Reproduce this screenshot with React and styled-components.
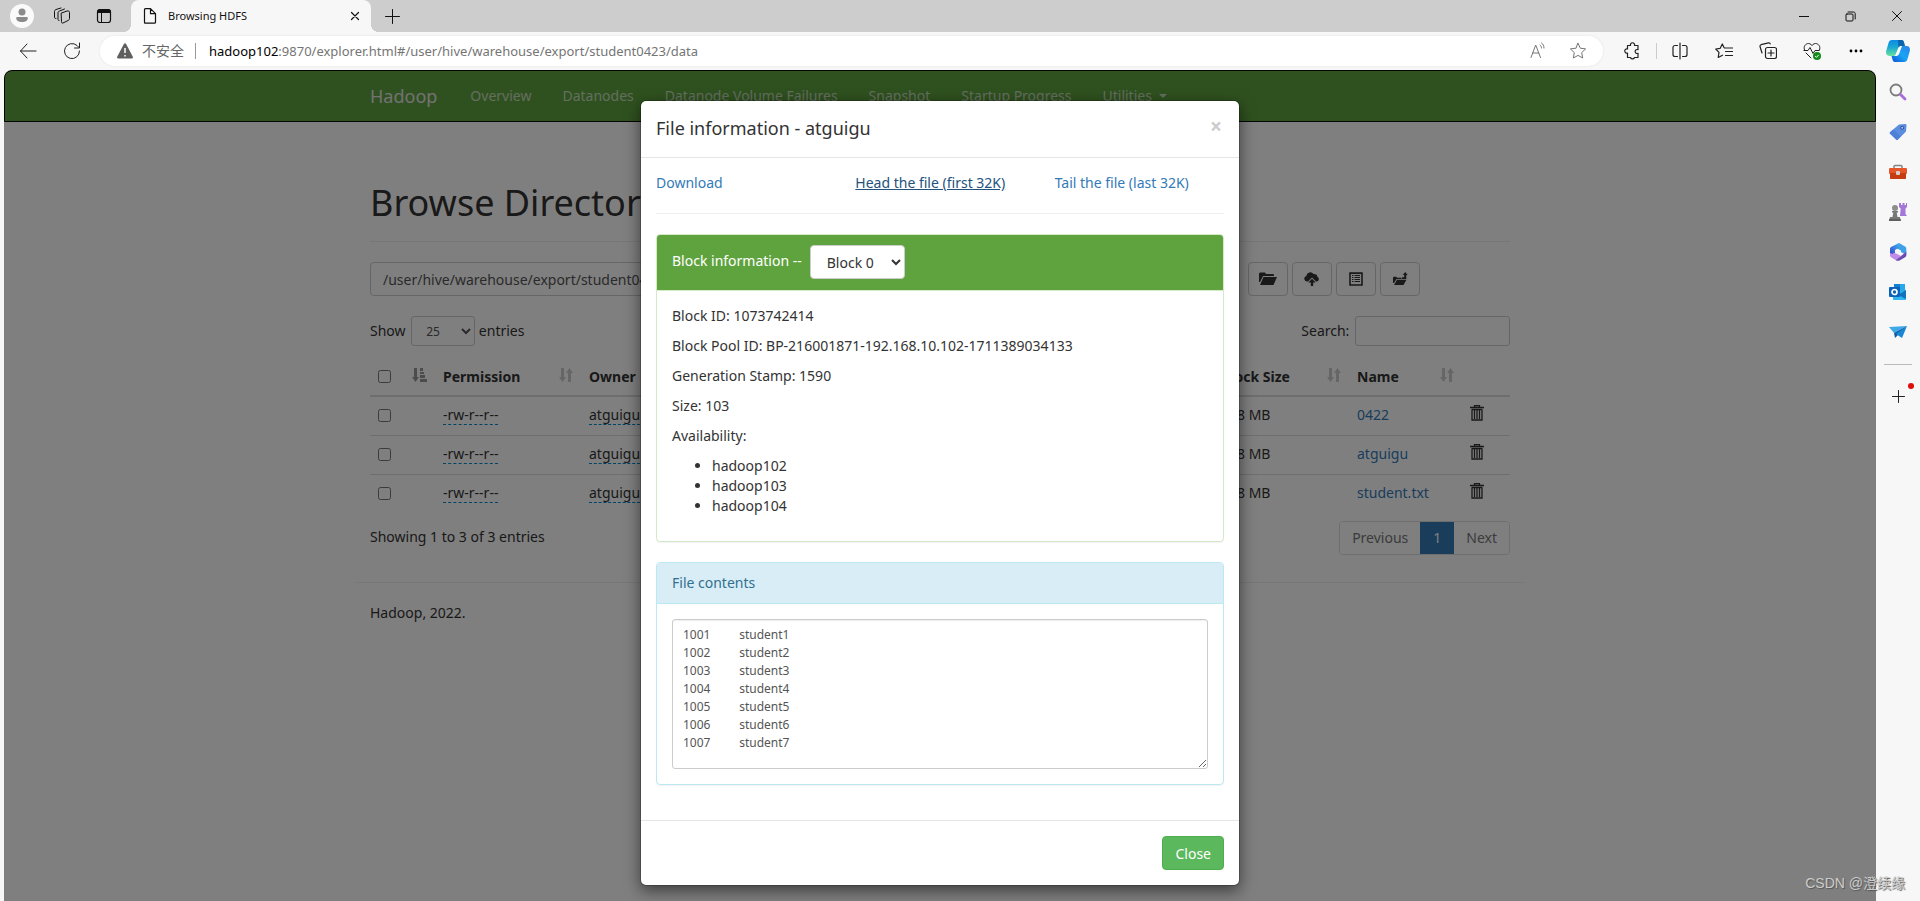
import React from "react";
import styled, { createGlobalStyle } from "styled-components";

const files = ["0422", "atguigu", "student.txt"];
const sizes = ["0 B", "103 B", "103 B"];
const dates = ["Apr 22 19:50", "Apr 23 10:12", "Apr 23 09:36"];
const hosts = ["hadoop102", "hadoop103", "hadoop104"];
const columns = ["Permission", "Owner", "Group", "Size", "Last Modified", "Replication", "Block Size", "Name"];
const contents = [1, 2, 3, 4, 5, 6, 7].map((n) => `100${n}\tstudent${n}`).join("\n");

function Line({ size = 18, width = 1, children }) {
  return (
    <svg width={size} height={size} viewBox={`0 0 ${size} ${size}`} fill="none" stroke="currentColor" strokeWidth={width} strokeLinecap="round" strokeLinejoin="round" aria-hidden="true">
      {children}
    </svg>
  );
}

function SortIcon() {
  return (
    <svg width="14" height="16" viewBox="0 0 14 16" fill="currentColor" aria-hidden="true">
      <path d="M2 1h3v9h2l-3.500 5L0 10h2zM9 15h3V6h2l-3.500-5L7 6h2z" />
    </svg>
  );
}

function SortAttrIcon() {
  return (
    <svg width="15" height="16" viewBox="0 0 15 16" fill="currentColor" aria-hidden="true">
      <path d="M2 1h3v9h2l-3.500 5L0 10h2zM8 1h3v3H8zM8 5h4v2H8zM8 8h5v3H8zM8 12h7v3H8z" />
    </svg>
  );
}

function TrashIcon() {
  return (
    <svg width="14" height="16" viewBox="0 0 14 16" fill="none" stroke="currentColor" aria-hidden="true">
      <path d="M4.500 2.500v-2h5v2M0 2.500h14" strokeWidth="1.300" />
      <path d="M2 5v10h10V5M1.500 4.500h11M4.500 5v9M7 5v9M9.500 5v9" strokeWidth="1.300" />
    </svg>
  );
}

function FolderIcon() {
  return (
    <svg width="18" height="14" viewBox="0 0 18 14" fill="currentColor" aria-hidden="true">
      <path d="M0 10V1.500L1 .500h5l1 1.500h7.500l.500 1v1H4L1 10zM4.500 5H18l-3.500 8H1z" />
    </svg>
  );
}

function UploadIcon() {
  return (
    <svg width="16" height="14" viewBox="0 0 16 14" fill="currentColor" aria-hidden="true">
      <path d="M3 9.500A2.800 2.800 0 0 1 2.300 4 4 4 0 0 1 9.500 2 3.400 3.400 0 0 1 13.500 5a2.400 2.400 0 0 1-.5 4.500h-1L8 5.500 4 9.500z" />
      <path d="M8 6.800l3.700 3.800H9.200V14H6.800v-3.400H4.300z" />
    </svg>
  );
}

function ListIcon() {
  return (
    <svg width="14" height="14" viewBox="0 0 14 14" fill="none" stroke="currentColor" aria-hidden="true">
      <path d="M1 1h12v12H1z" strokeWidth="1.600" />
      <path d="M3 3.500h1.500M3 5.500h1.500M3 7.500h1.500M3 9.500h1.500M5.500 3.500H11M5.500 5.500H11M5.500 7.500H11M5.500 9.500H11M1 1.500h12" />
    </svg>
  );
}

function MoveIcon() {
  return (
    <svg width="15" height="14" viewBox="0 0 15 14" fill="currentColor" aria-hidden="true">
      <path d="M0 11V5.500l.7-.7h2.600l.7 1h4.500V7h-5L1 11zM4 7.700h9.500L10.500 13H1z" />
      <path d="M9 5.300h2.200V3H9.800l2.400-3 2.500 3h-1.400v4H9z" />
    </svg>
  );
}

function CopilotIcon() {
  return (
    <svg width="24" height="24" viewBox="0 0 24 24" aria-hidden="true">
      <defs>
        <linearGradient id="cpA" x1="0" y1="0" x2="0" y2="1">
          <stop offset="0" stopColor="#0c8ae6" />
          <stop offset=".45" stopColor="#19a8d4" />
          <stop offset="1" stopColor="#67e29b" />
        </linearGradient>
        <linearGradient id="cpB" x1="1" y1="0" x2="0" y2="1">
          <stop offset="0" stopColor="#2b7fe8" />
          <stop offset=".5" stopColor="#19a6f5" />
          <stop offset="1" stopColor="#0b4fd6" />
        </linearGradient>
      </defs>
      <path d="M6 1h9.500c1.700 0 2.200 1.300 2.500 2.500L19 7h-4c-2 0-2.500 1-3.200 3l-2 5.500C9.300 16.700 8 17 7 17H3.500C.5 17-.3 14.500.2 12L2.500 4C3 2 4 1 6 1z" fill="url(#cpA)" />
      <path d="M18 23H9c-1.700 0-2-1.300-2.500-2.500L5.500 17H9c2 0 2.500-1 3.200-3l2-5.500C14.700 7.300 16 7 17 7h3.500c3 0 3.800 2.500 3.300 5l-2.300 8c-.5 2-1.500 3-3.500 3z" fill="url(#cpB)" />
      <path d="M12 1h4c1 0 1.700 1 2 2.500L19 7h-3c-2 0-3 .5-3.500 2z" fill="#09549c" opacity=".75" />
      <path d="M13 8.500c.5-1 1.500-1.500 3-1.500l-3 8c-.6 1.500-2 2-4 2z" fill="#fff" />
    </svg>
  );
}

function SearchIcon() {
  return (
    <svg width="18" height="18" viewBox="0 0 18 18" fill="none" aria-hidden="true">
      <circle cx="7" cy="7" r="5.500" stroke="#7b7b7b" strokeWidth="1.800" />
      <path d="M11.500 11.500l4.500 4.500" stroke="#a76ddb" strokeWidth="2.800" strokeLinecap="round" />
    </svg>
  );
}

function TagIcon() {
  return (
    <svg width="18" height="18" viewBox="0 0 18 18" aria-hidden="true">
      <path d="M10 1.500L16 1c1 0 1.500.5 1.500 1.500l-.5 6-8 8c-.7.7-1.400.7-2 0L1.200 11c-.7-.7-.7-1.400 0-2z" fill="#5b8de0" />
      <path d="M3 12.500L1.200 11c-.7-.7-.7-1.400 0-2L4 6.500l8 7-3 3c-.7.7-1.400.7-2 0z" fill="#4672cf" opacity=".5" />
      <circle cx="13.200" cy="4.800" r="1.500" fill="#a9c8f5" stroke="#274a94" />
    </svg>
  );
}

function ToolboxIcon() {
  return (
    <svg width="18" height="16" viewBox="0 0 18 16" aria-hidden="true">
      <path d="M5 4V2.500c0-.8.4-1 1-1h6c.6 0 1 .2 1 1V4" fill="none" stroke="#858585" strokeWidth="1.500" />
      <rect y="4" width="18" height="6" rx="1" fill="#e5572a" />
      <path d="M1 9h16v5c0 .7-.4 1-1 1H2c-.6 0-1-.3-1-1z" fill="#c63c11" />
      <rect x="7" y="7" width="4" height="4" rx="1" fill="#d5d0cd" />
    </svg>
  );
}

function GamesIcon() {
  return (
    <svg width="18" height="18" viewBox="0 0 18 18" aria-hidden="true">
      <path d="M10 0h2v2h1.500V0h2v2H17V0h1v4l-1.500 1.500V11L18 13h-7l.7-7.500L10 4z" fill="#a376d8" />
      <circle cx="6" cy="5" r="3" fill="#8d8d8d" />
      <path d="M3 8h6v1.500H7.700L8.500 14H11l.7 4H0l1-4h2.500l.8-4.500H3z" fill="#777" />
      <path d="M0 16h11.700v2H0z" fill="#5f5f5f" />
    </svg>
  );
}

function OfficeIcon() {
  return (
    <svg width="18" height="18" viewBox="0 0 18 18" aria-hidden="true">
      <defs>
        <linearGradient id="ofA" x1="1" y1="0" x2="0" y2="1">
          <stop offset="0" stopColor="#41b7f0" />
          <stop offset="1" stopColor="#3443c8" />
        </linearGradient>
        <linearGradient id="ofB" x1="0" y1="0" x2="1" y2="1">
          <stop offset="0" stopColor="#8c7ae6" />
          <stop offset="1" stopColor="#5a2d91" />
        </linearGradient>
      </defs>
      <path d="M10 0l6 3.500c1 .6 1.300 1.200 1.300 2.500v6L12 9V7.500L7 5z" fill="#3fa0ea" />
      <path d="M10 0L2.500 3.700C1.300 4.400 1 5 1 6v6.500L6 10V7l5-3z" fill="url(#ofA)" />
      <path d="M1 10v2c0 1.300.5 2 1.500 2.500l4 2.500L12 13l-6-3-2 1z" fill="#c18be8" />
      <path d="M17.300 8.500V12c0 1-.3 1.700-1.300 2.300l-5 3c-1.500.8-3 .8-4.500-.3L12 13z" fill="url(#ofB)" />
    </svg>
  );
}

function OutlookIcon() {
  return (
    <svg width="18" height="18" viewBox="0 0 18 18" aria-hidden="true">
      <path d="M5 1h11v9H5z" fill="#28a8ea" />
      <path d="M5 1h6v7H5z" fill="#1480cf" />
      <path d="M4 9h6l7-2v9c0 .6-.4 1-1 1H5c-.6 0-1-.4-1-1z" fill="#2fb6f0" />
      <path d="M9 12l8-5v9z" fill="#1272bd" />
      <rect y="4" width="11" height="10" rx="1" fill="#0a62bb" />
      <circle cx="5.500" cy="9" r="2.500" fill="none" stroke="#fff" strokeWidth="1.700" />
    </svg>
  );
}

function SendIcon() {
  return (
    <svg width="18" height="14" viewBox="0 0 18 14" aria-hidden="true">
      <path d="M0 2L18 1 5 8z" fill="#3ea9e8" />
      <path d="M18 1L5 8l1 5 3-3z" fill="#0e5da3" />
      <path d="M18 1l-5 12-6-4z" fill="#1b87d4" />
    </svg>
  );
}

function Chrome() {
  return (
    <>
      <TabBar>
        <Avatar aria-label="Profile">
          <svg width="12" height="16" viewBox="0 0 12 16" fill="#8b8b8b" aria-hidden="true">
            <circle cx="6" cy="4" r="3.500" />
            <path d="M1.500 9h9c.8 0 1.300.5 1.300 1.200 0 2.200-2.300 3.800-5.800 3.800S.2 12.400.2 10.200C.2 9.500.7 9 1.500 9z" />
          </svg>
        </Avatar>
        <TabTool aria-label="Workspaces">
          <Line>
            <path d="M8.500 6l5.500-2c1.500-.4 2.500.2 2.500 1.500v6c0 1-.5 1.500-1.500 2L10 16c-1 .3-1.500 0-1.500-1z" />
            <path d="M6 13.500c-.7 0-1-.3-1-1.200V6c0-1 .4-1.600 1.500-2l5-2M3 11.500c-1 .2-1.500-.3-1.500-1.200V4.500c0-1 .5-1.600 1.500-2L8 1" />
          </Line>
        </TabTool>
        <TabTool aria-label="Tab actions">
          <svg width="16" height="16" viewBox="0 0 16 16" fill="none" stroke="currentColor" aria-hidden="true">
            <rect x="1.500" y="1.500" width="13" height="13" rx="2.500" strokeWidth="1.200" />
            <path d="M2 2h12v2.500H2z" fill="currentColor" />
            <path d="M5.500 5v9.500" />
          </svg>
        </TabTool>
        <Tab>
          <Line size={16} width={1.2}>
            <path d="M3.500.7h5l5 5v8.500c0 .7-.3 1-1 1h-9c-.7 0-1-.3-1-1V1.700c0-.7.3-1 1-1zM8.500.7v5h5" />
          </Line>
          <TabTitle>Browsing HDFS</TabTitle>
          <PlainButton aria-label="Close tab">
            <Line size={10} width={1.2}><path d="M1.500 1.500l7 7M8.500 1.500l-7 7" /></Line>
          </PlainButton>
        </Tab>
        <PlainButton aria-label="New tab">
          <Line size={15}><path d="M7.500 .5v14M.5 7.500h14" /></Line>
        </PlainButton>
        <WindowControls>
          <PlainButton aria-label="Minimize"><Line size={10}><path d="M0 5.500h10" /></Line></PlainButton>
          <PlainButton aria-label="Restore">
            <Line size={11}><path d="M2 3h5c.7 0 1 .3 1 1v5c0 .7-.3 1-1 1H2c-.7 0-1-.3-1-1V4c0-.7.3-1 1-1zM3 1h5.500c1 0 1.700.7 1.700 1.700V8" /></Line>
          </PlainButton>
          <PlainButton aria-label="Close window"><Line size={10}><path d="M.5.5l9 9M9.500.5l-9 9" /></Line></PlainButton>
        </WindowControls>
      </TabBar>
      <Toolbar>
        <ToolButton aria-label="Back"><Line><path d="M1.500 9H17M8 2L1.500 9 8 16" /></Line></ToolButton>
        <ToolButton aria-label="Refresh">
          <Line><path d="M16.500 9A7.500 7.500 0 1 1 14 3.500l2 2M16.500 1v5h-5" /></Line>
        </ToolButton>
        <AddressBar>
          <svg width="18" height="16" viewBox="0 0 18 16" aria-hidden="true">
            <path d="M8 .8c.5-.8 1.500-.8 2 0l6.800 13c.4.800 0 1.700-1 1.700H2.200c-1 0-1.400-.9-1-1.700z" fill="#5f5f5f" />
            <path d="M9 5v5M9 12v1.500" stroke="#fff" strokeWidth="1.500" />
          </svg>
          <Unsafe>不安全</Unsafe>
          <Url><b>hadoop102</b>:9870/explorer.html#/user/hive/warehouse/export/student0423/data</Url>
          <AddressTools>
            <PlainButton aria-label="Read aloud">
              <Line><path d="M2 15.500L6.700 3l4.800 12.500M3.700 11h6M11 3c1 .8 1.500 1.800 1.500 3M12.500 1c1.700 1.200 2.500 2.800 2.500 5" /></Line>
            </PlainButton>
            <PlainButton aria-label="Favorite">
              <Line><path d="M9 1.300l2.300 4.900 5.300.7-3.900 3.700 1 5.400L9 13.400 4.300 16l1-5.400L1.400 6.900l5.300-.7z" /></Line>
            </PlainButton>
          </AddressTools>
        </AddressBar>
        <Tools>
          <ToolButton aria-label="Extensions">
            <Line width={1.2}><path d="M4.500 3.500h3a2.100 2.100 0 1 1 4 0h3.500v4.200a2 2 0 1 0 0 3.600v4.200h-3.500a2.100 2.100 0 0 1-4 0h-3v-4.500a2.100 2.100 0 1 1 0-4z" /></Line>
          </ToolButton>
          <Rule />
          <ToolButton aria-label="Split screen">
            <Line width={1.2}><path d="M9 1v16M6.500 3.500H4a2 2 0 0 0-2 2v7a2 2 0 0 0 2 2h2.500M11.500 3.500H14a2 2 0 0 1 2 2v7a2 2 0 0 1-2 2h-2.500" /></Line>
          </ToolButton>
          <ToolButton aria-label="Favorites">
            <Line width={1.2}><path d="M9 5.500L7.300 2 5.200 6.300l-4.500.7L4 10.400 3.200 15.500l4.300-2.300M9.500 6h8M10.500 9.500h7M10.500 13.500h7" /></Line>
          </ToolButton>
          <ToolButton aria-label="Collections">
            <Line width={1.2}><path d="M3 11L1 4.500C.8 3.500 1.200 3 2 2.700l7.500-1.800c.8-.2 1.500.2 1.700 1" /><rect x="6.500" y="5.500" width="11" height="11" rx="2" /><path d="M12 8v6M9 11h6" /></Line>
          </ToolButton>
          <ToolButton aria-label="Browser essentials">
            <Line><path d="M1.500 8C0 4 3 1.500 5.500 1.500 7.500 1.500 9 3.500 9 3.500s1.500-2 3.500-2C15 1.500 18 4 16.500 8M1 8.500h4l2-3 3 6 2-3h4M3 11l5 5" /><circle cx="14" cy="14" r="4" fill="#128a1c" stroke="none" /><path d="M12.500 14.500l1 .8 2-2.200" stroke="#fff" /></Line>
          </ToolButton>
          <ToolButton aria-label="Settings and more">
            <svg width="14" height="4" viewBox="0 0 14 4" aria-hidden="true"><circle cx="2" cy="2" r="1.400" /><circle cx="7" cy="2" r="1.400" /><circle cx="12" cy="2" r="1.400" /></svg>
          </ToolButton>
          <CopilotButton aria-label="Copilot"><CopilotIcon /></CopilotButton>
        </Tools>
      </Toolbar>
    </>
  );
}

function Explorer() {
  return (
    <>
      <Navbar>
        <Container>
          <Brand href="#">Hadoop</Brand>
          <NavLink href="#">Overview</NavLink>
          <NavLink href="#">Datanodes</NavLink>
          <NavLink href="#">Datanode Volume Failures</NavLink>
          <NavLink href="#">Snapshot</NavLink>
          <NavLink href="#">Startup Progress</NavLink>
          <NavLink href="#">Utilities<Caret /></NavLink>
        </Container>
      </Navbar>
      <Main>
        <PageTitle>Browse Directory</PageTitle>
        <PathRow>
          <PathInput aria-label="Directory" defaultValue="/user/hive/warehouse/export/student0423/data" />
          <ActionButton aria-label="Create directory"><FolderIcon /></ActionButton>
          <ActionButton aria-label="Upload files"><UploadIcon /></ActionButton>
          <ActionButton aria-label="Cut"><ListIcon /></ActionButton>
          <ActionButton aria-label="Parent directory"><MoveIcon /></ActionButton>
        </PathRow>
        <FilterRow>
          <label>
            Show{" "}
            <LengthSelect defaultValue="25"><option>25</option></LengthSelect>{" "}
            entries
          </label>
          <label>Search: <SearchInput type="search" /></label>
        </FilterRow>
        <FileTable>
          <thead>
            <tr>
              <Th $w={65}>
                <HeadCell><Check type="checkbox" aria-label="Select all" /><Sort $active><SortAttrIcon /></Sort></HeadCell>
              </Th>
              {columns.map((c, i) => (
                <Th key={c} $w={[146, 120, 130, 96, 156, 130, 136, 113][i]}>
                  <HeadCell>{c}<Sort><SortIcon /></Sort></HeadCell>
                </Th>
              ))}
              <Th $w={48} />
            </tr>
          </thead>
          <tbody>
            {files.map((f, i) => (
              <tr key={f}>
                <Td><Check type="checkbox" aria-label={`Select ${f}`} $row /></Td>
                <Td><Editable>-rw-r--r--</Editable></Td>
                <Td><Editable>atguigu</Editable></Td>
                <Td><Editable>supergroup</Editable></Td>
                <Td>{sizes[i]}</Td>
                <Td>{dates[i]}</Td>
                <Td><Editable>3</Editable></Td>
                <Td>128 MB</Td>
                <Td><Link href="#">{f}</Link></Td>
                <Td><PlainButton aria-label={`Delete ${f}`}><TrashIcon /></PlainButton></Td>
              </tr>
            ))}
          </tbody>
        </FileTable>
        <TableFooter>
          <span>Showing 1 to 3 of 3 entries</span>
          <Pagination>
            <PageLink href="#">Previous</PageLink>
            <PageLink href="#" $active>1</PageLink>
            <PageLink href="#">Next</PageLink>
          </Pagination>
        </TableFooter>
        <Footer>Hadoop, 2022.</Footer>
      </Main>
    </>
  );
}

function FileModal() {
  return (
    <Backdrop>
      <Dialog role="dialog" aria-labelledby="file-title">
        <DialogHeader>
          <DialogTitle id="file-title">File information - atguigu</DialogTitle>
          <Dismiss aria-label="Dismiss">×</Dismiss>
        </DialogHeader>
        <DialogBody>
          <LinkRow>
            <Link href="#">Download</Link>
            <Link href="#" $hover>Head the file (first 32K)</Link>
            <Link href="#">Tail the file (last 32K)</Link>
          </LinkRow>
          <Divider />
          <Panel $border="#d6e9c6">
            <PanelHeading $tall $bg="#5fa33e" $color="#fff" $border="#d6e9c6">
              <BlockLabel htmlFor="block">Block information -- </BlockLabel>
              <BlockSelect id="block" defaultValue="Block 0"><option>Block 0</option></BlockSelect>
            </PanelHeading>
            <PanelBody>
              <Info>Block ID: 1073742414</Info>
              <Info>Block Pool ID: BP-216001871-192.168.10.102-1711389034133</Info>
              <Info>Generation Stamp: 1590</Info>
              <Info>Size: 103</Info>
              <Info>Availability:</Info>
              <HostList>{hosts.map((h) => <li key={h}>{h}</li>)}</HostList>
            </PanelBody>
          </Panel>
          <Panel $border="#bce8f1">
            <PanelHeading as="label" htmlFor="contents" $bg="#d9edf7" $color="#31708f" $border="#bce8f1">File contents</PanelHeading>
            <PanelBody>
              <Contents id="contents" defaultValue={contents} />
            </PanelBody>
          </Panel>
        </DialogBody>
        <DialogFooter>
          <CloseButton>Close</CloseButton>
        </DialogFooter>
      </Dialog>
    </Backdrop>
  );
}

function App() {
  return (
    <Window>
      <GlobalStyle />
      <Chrome />
      <Content>
        <Page>
          <Explorer />
          <FileModal />
        </Page>
        <Sidebar>
          <SideButton aria-label="Search"><SearchIcon /></SideButton>
          <SideButton aria-label="Shopping"><TagIcon /></SideButton>
          <SideButton aria-label="Tools"><ToolboxIcon /></SideButton>
          <SideButton aria-label="Games"><GamesIcon /></SideButton>
          <SideButton aria-label="Microsoft 365"><OfficeIcon /></SideButton>
          <SideButton aria-label="Outlook"><OutlookIcon /></SideButton>
          <SideButton aria-label="Drop"><SendIcon /></SideButton>
          <SideRule />
          <SideButton aria-label="Customize"><Line size={13}><path d="M6.500 .5v12M.5 6.500h12" /></Line><Dot /></SideButton>
        </Sidebar>
      </Content>
      <Watermark>CSDN @澄续缘</Watermark>
    </Window>
  );
}

export default App;

const GlobalStyle = createGlobalStyle`
  * {
    box-sizing: border-box;
  }
  body {
    margin: 0;
    font-family: "Noto Sans", "Noto Sans CJK SC", sans-serif;
    font-size: 14px;
    line-height: 20px;
    color: #333;
  }
  input, select, textarea, button {
    font-family: inherit;
  }
`;

const Window = styled.div`
  position: relative;
  display: flex;
  flex-direction: column;
  height: 100vh;
  overflow: hidden;
  background: #f7f7f7;
`;

const PlainButton = styled.button`
  display: flex;
  align-items: center;
  justify-content: center;
  padding: 0;
  border: 0;
  background: none;
  color: inherit;
`;

const TabBar = styled.div`
  display: flex;
  align-items: center;
  height: 32px;
  flex-shrink: 0;
  padding-left: 10px;
  background: #cdcdcd;
  color: #111;
`;

const Avatar = styled(PlainButton)`
  width: 24px;
  height: 24px;
  margin-right: 7px;
  border-radius: 50%;
  background: #fafafa;
`;

const TabTool = styled(PlainButton)`
  width: 42px;
  height: 32px;
`;

const Tab = styled.div`
  position: relative;
  display: flex;
  align-items: center;
  align-self: stretch;
  width: 240px;
  margin: 0 14px 0 6px;
  padding: 0 11px;
  border-radius: 8px 8px 0 0;
  background: #f7f7f7;
  &::before,
  &::after {
    content: "";
    position: absolute;
    bottom: 0;
    width: 8px;
    height: 8px;
  }
  &::before {
    left: -8px;
    background: radial-gradient(circle at 0 0, #cdcdcd 8px, #f7f7f7 8px);
  }
  &::after {
    right: -8px;
    background: radial-gradient(circle at 100% 0, #cdcdcd 8px, #f7f7f7 8px);
  }
`;

const TabTitle = styled.span`
  flex: 1;
  margin-left: 10px;
  font-size: 11px;
  color: #111;
`;

const WindowControls = styled.div`
  display: flex;
  gap: 36px;
  margin-left: auto;
  padding-right: 18px;
`;

const Toolbar = styled.div`
  display: flex;
  align-items: center;
  height: 38px;
  flex-shrink: 0;
  padding-left: 6px;
  color: #222;
`;

const ToolButton = styled(PlainButton)`
  width: 44px;
  height: 30px;
`;

const CopilotButton = styled(ToolButton)`
  width: 40px;
`;

const AddressBar = styled.div`
  display: flex;
  align-items: center;
  flex: 1;
  height: 30px;
  margin-left: 6px;
  padding: 0 16px;
  border-radius: 15px;
  background: #fff;
  box-shadow: 0 0 3px rgba(0, 0, 0, 0.08);
  color: #757575;
`;

const Unsafe = styled.span`
  margin-left: 8px;
  padding-right: 11px;
  border-right: 1px solid #999;
  line-height: 16px;
  color: #666;
`;

const Url = styled.span`
  margin-left: 13px;
  font-size: 13px;
  b {
    font-weight: 400;
    color: #000;
  }
`;

const AddressTools = styled.div`
  display: flex;
  gap: 22px;
  margin-left: auto;
`;

const Tools = styled.div`
  display: flex;
  align-items: center;
  padding: 0 2px 0 7px;
`;

const Rule = styled.div`
  width: 1px;
  height: 16px;
  margin: 0 1px 0 2px;
  background: #ccc;
`;

const Content = styled.div`
  display: flex;
  flex: 1;
  min-height: 0;
`;

const Page = styled.div`
  position: relative;
  flex: 1;
  margin-left: 4px;
  overflow: hidden;
  border-radius: 8px 8px 0 0;
  background: #fff;
`;

const Navbar = styled.nav`
  border: 1px solid #080808;
  border-radius: 8px 8px 0 0;
  background: #5fa33e;
`;

const Container = styled.div`
  display: flex;
  gap: 1px;
  max-width: 1170px;
  margin: 0 auto;
`;

const NavLink = styled.a`
  display: flex;
  align-items: center;
  height: 50px;
  padding: 0 15px;
  color: #c8dcbe;
  text-decoration: none;
`;

const Brand = styled(NavLink)`
  padding-right: 17px;
  font-size: 18px;
  color: #e4e4e4;
`;

const Caret = styled.span`
  margin-left: 7px;
  border: 4px solid transparent;
  border-top-color: currentColor;
  border-bottom: 0;
`;

const Main = styled.main`
  display: flex;
  flex-direction: column;
  max-width: 1170px;
  margin: 60px auto 0;
  padding: 0 15px;
`;

const PageTitle = styled.h1`
  margin: 0 0 20px;
  padding-bottom: 17px;
  border-bottom: 1px solid #eee;
  font-size: 36px;
  line-height: 42px;
  font-weight: 400;
`;

const PathRow = styled.div`
  display: flex;
  gap: 4px;
  padding-right: 90px;
`;

const PathInput = styled.input`
  flex: 1;
  height: 34px;
  margin-right: 14px;
  padding: 6px 12px;
  border: 1px solid #ccc;
  border-radius: 4px;
  background: #fff;
  color: #555;
  font-size: 14px;
`;

const ActionButton = styled(PlainButton)`
  width: 40px;
  height: 34px;
  border: 1px solid #ccc;
  border-radius: 4px;
  background: #fff;
  color: #333;
`;

const FilterRow = styled.div`
  display: flex;
  justify-content: space-between;
  margin-top: 20px;
`;

const LengthSelect = styled.select`
  width: 64px;
  height: 30px;
  margin-left: 2px;
  padding: 5px 10px;
  border: 1px solid #ccc;
  border-radius: 3px;
  background: #fff;
  color: #555;
  font-size: 12px;
`;

const SearchInput = styled.input`
  width: 155px;
  height: 30px;
  margin-left: 2px;
  border: 1px solid #ccc;
  border-radius: 3px;
`;

const FileTable = styled.table`
  width: 100%;
  margin-top: 5px;
  border-collapse: collapse;
  table-layout: fixed;
`;

const Th = styled.th`
  width: ${(props) => props.$w}px;
  height: 45px;
  padding: 8px;
  border-bottom: 2px solid #ddd;
  text-align: left;
  vertical-align: bottom;
`;

const HeadCell = styled.div`
  display: flex;
  align-items: center;
  justify-content: space-between;
  white-space: nowrap;
`;

const Sort = styled.span`
  display: flex;
  align-items: flex-start;
  height: 20px;
  color: ${(props) => (props.$active ? "#999" : "#ccc")};
`;

const Td = styled.td`
  height: 39px;
  padding: 8px;
  border-top: 1px solid #ddd;
  vertical-align: top;
`;

const Check = styled.input`
  display: block;
  width: 13px;
  height: 13px;
  margin: ${(props) => (props.$row ? "4px" : 0)} 0 2px;
`;

const Editable = styled.span`
  border-bottom: 1px dashed #08c;
`;

const Link = styled.a`
  color: ${(props) => (props.$hover ? "#23527c" : "#337ab7")};
  text-decoration: ${(props) => (props.$hover ? "underline" : "none")};
`;

const TableFooter = styled.div`
  display: flex;
  justify-content: space-between;
  margin-top: 8px;
  line-height: 32px;
`;

const Pagination = styled.div`
  display: flex;
  height: 34px;
  overflow: hidden;
  border: 1px solid #ddd;
  border-radius: 4px;
`;

const PageLink = styled.a`
  padding: 0 ${(props) => (props.$active ? 13 : 12)}px;
  background: ${(props) => (props.$active ? "#337ab7" : "#fff")};
  color: ${(props) => (props.$active ? "#fff" : "#777")};
  line-height: 32px;
  text-decoration: none;
`;

const Footer = styled.footer`
  margin: 27px -15px 0;
  padding: 20px 15px;
  border-top: 1px solid #eee;
`;

const Backdrop = styled.div`
  position: absolute;
  inset: 0;
  padding: 30px 10px;
  background: rgba(0, 0, 0, 0.5);
`;

const Dialog = styled.section`
  max-width: 600px;
  margin: 0 auto;
  border: 1px solid rgba(0, 0, 0, 0.2);
  border-radius: 6px;
  background: #fff;
  background-clip: padding-box;
  box-shadow: 0 5px 15px rgba(0, 0, 0, 0.5);
`;

const DialogHeader = styled.header`
  display: flex;
  justify-content: space-between;
  align-items: flex-start;
  padding: 15px 15px 17px;
  border-bottom: 1px solid #e5e5e5;
`;

const DialogTitle = styled.h4`
  margin: 0;
  font-size: 18px;
  line-height: 24px;
  font-weight: 400;
`;

const Dismiss = styled(PlainButton)`
  width: 16px;
  height: 20px;
  color: #ccc;
  font-size: 21px;
  font-weight: 700;
`;

const DialogBody = styled.div`
  padding: 15px;
`;

const LinkRow = styled.div`
  display: grid;
  grid-template-columns: repeat(3, 1fr);
  margin-right: -30px;
`;

const Divider = styled.hr`
  margin: 20px 0;
  border: 0;
  border-top: 1px solid #eee;
`;

const Panel = styled.div`
  margin-bottom: 20px;
  border: 1px solid ${(props) => props.$border};
  border-radius: 4px;
  box-shadow: 0 1px 1px rgba(0, 0, 0, 0.05);
`;

const PanelHeading = styled.div`
  display: flex;
  align-items: flex-start;
  gap: 8px;
  min-height: ${(props) => (props.$tall ? 56 : 41)}px;
  padding: 10px 15px;
  border-bottom: 1px solid ${(props) => props.$border};
  border-radius: 3px 3px 0 0;
  background: ${(props) => props.$bg};
  color: ${(props) => props.$color};
`;

const BlockLabel = styled.label`
  line-height: 32px;
`;

const BlockSelect = styled.select`
  width: 95px;
  height: 34px;
  padding: 6px 12px;
  border: 1px solid #ccc;
  border-radius: 4px;
  background: #fff;
  color: #333;
  font-size: 14px;
`;

const PanelBody = styled.div`
  padding: 15px;
`;

const Info = styled.p`
  margin: 0 0 10px;
`;

const HostList = styled.ul`
  margin: 0 0 10px;
  padding-left: 40px;
`;

const Contents = styled.textarea`
  display: block;
  width: 100%;
  height: 150px;
  padding: 6px 10px;
  border: 1px solid #ccc;
  border-radius: 3px;
  box-shadow: inset 0 1px 1px rgba(0, 0, 0, 0.075);
  color: #555;
  font-size: 12px;
  line-height: 18px;
  tab-size: 9;
`;

const DialogFooter = styled.footer`
  display: flex;
  justify-content: flex-end;
  padding: 15px;
  border-top: 1px solid #e5e5e5;
`;

const CloseButton = styled.button`
  height: 34px;
  padding: 6px 12px;
  border: 1px solid #4cae4c;
  border-radius: 4px;
  background: #5cb85c;
  color: #fff;
  font-size: 14px;
`;

const Sidebar = styled.aside`
  display: flex;
  flex-direction: column;
  align-items: center;
  width: 44px;
  padding-top: 2px;
  color: #222;
`;

const SideButton = styled(PlainButton)`
  position: relative;
  width: 44px;
  height: 40px;
`;

const SideRule = styled.div`
  width: 28px;
  height: 1px;
  margin: 12px 0 11px;
  background: #bbb;
`;

const Dot = styled.span`
  position: absolute;
  top: 7px;
  right: 6px;
  width: 6px;
  height: 6px;
  border-radius: 50%;
  background: #e00b0b;
`;

const Watermark = styled.div`
  position: absolute;
  right: 15px;
  bottom: 8px;
  color: #ccc;
  font-family: "Liberation Sans", "Noto Sans CJK SC", sans-serif;
  font-size: 14px;
  text-shadow: 1px 1px 1px #555;
`;
